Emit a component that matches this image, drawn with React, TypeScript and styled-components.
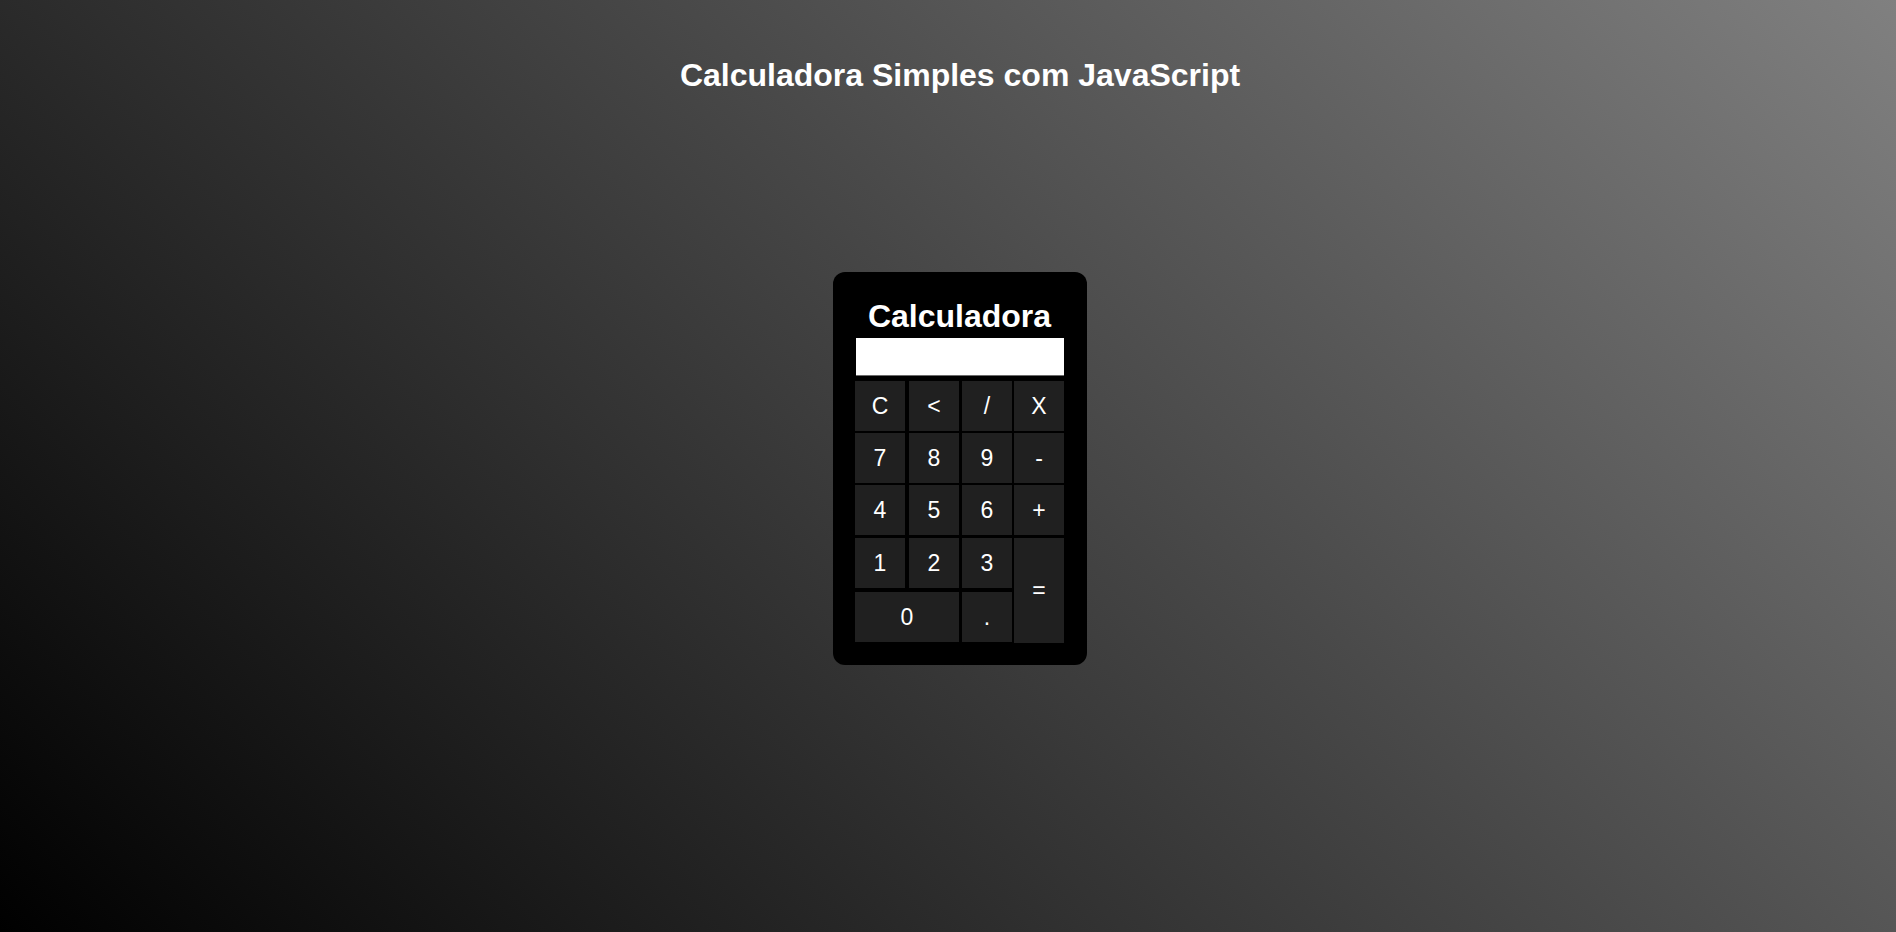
import React from "react";
import styled, { createGlobalStyle } from "styled-components";

const GlobalStyle = createGlobalStyle`
  html, body {
    margin: 0;
    padding: 0;
  }
  body {
    min-height: 100vh;
    background: linear-gradient(45deg, #000000, #808080);
    font-family: "Liberation Sans", Arial, sans-serif;
    color: #ffffff;
  }
`;

const Page = styled.main`
  min-height: 100vh;
  box-sizing: border-box;
  padding-left: 24px;
  display: flex;
  flex-direction: column;
  align-items: center;
`;

const Heading = styled.h1`
  margin: 57px 0 0;
  font-size: 32px;
  line-height: 37px;
  font-weight: bold;
  color: #ffffff;
`;

const Calculator = styled.div`
  margin-top: 178px;
  width: 254px;
  box-sizing: border-box;
  padding: 26px 23px 23px 22px;
  background: #000000;
  border-radius: 12px;
  display: flex;
  flex-direction: column;
  align-items: center;
`;

const CalcTitle = styled.h2`
  margin: 0;
  font-size: 32px;
  line-height: 37px;
  font-weight: bold;
  color: #ffffff;
`;

const Display = styled.div`
  margin: 3px 0 0 1px;
  width: 208px;
  height: 37px;
  background: #ffffff;
  border-bottom: 1px solid #6a6a6a;
  align-self: flex-start;
`;

const Keys = styled.div`
  margin-top: 5px;
  align-self: flex-start;
  display: grid;
  grid-template-columns: 54px 53px 52px 50px;
  grid-template-rows: 52px 52px 53px 54px 50px;
`;

const Key = styled.button<{ $wide?: boolean; $tall?: boolean }>`
  width: ${(p) => (p.$wide ? "104px" : "50px")};
  height: ${(p) => (p.$tall ? "105px" : "50px")};
  grid-column: ${(p) => (p.$wide ? "span 2" : "auto")};
  grid-row: ${(p) => (p.$tall ? "span 2" : "auto")};
  padding: 0;
  border: none;
  background: #202020;
  color: #ffffff;
  font-family: "Liberation Sans", Arial, sans-serif;
  font-size: 23px;
  display: flex;
  align-items: center;
  justify-content: center;
  cursor: pointer;
`;

export default function App() {
  return (
    <>
      <GlobalStyle />
      <Page>
        <Heading>Calculadora Simples com JavaScript</Heading>
        <Calculator>
          <CalcTitle>Calculadora</CalcTitle>
          <Display />
          <Keys>
            <Key>C</Key>
            <Key>&lt;</Key>
            <Key>/</Key>
            <Key>X</Key>
            <Key>7</Key>
            <Key>8</Key>
            <Key>9</Key>
            <Key>-</Key>
            <Key>4</Key>
            <Key>5</Key>
            <Key>6</Key>
            <Key>+</Key>
            <Key>1</Key>
            <Key>2</Key>
            <Key>3</Key>
            <Key $tall>=</Key>
            <Key $wide>0</Key>
            <Key>.</Key>
          </Keys>
        </Calculator>
      </Page>
    </>
  );
}
